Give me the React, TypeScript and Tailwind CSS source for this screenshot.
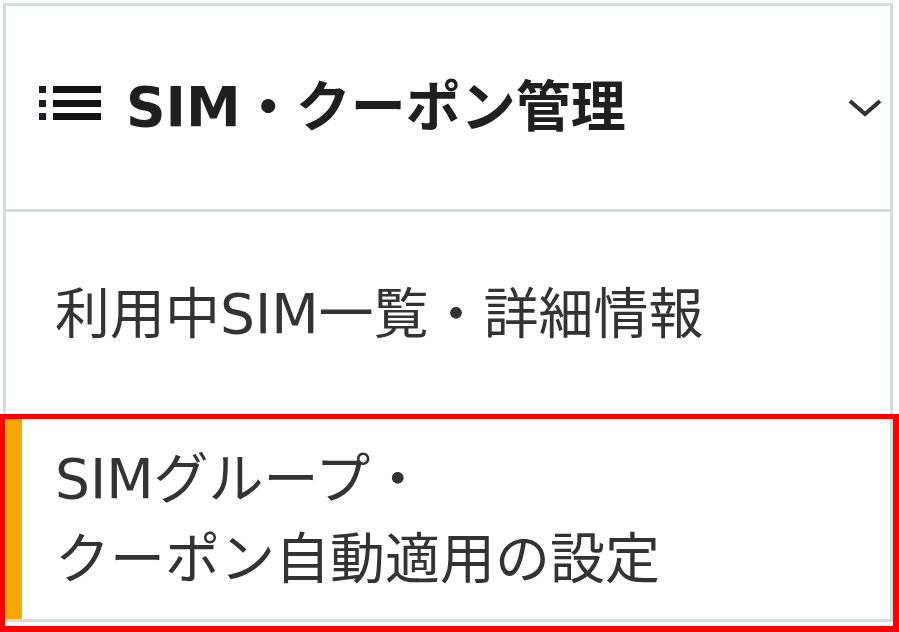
const font = { fontFamily: '"DejaVu Sans", "Noto Sans CJK JP", sans-serif' };

const ListIcon = () => (
  <svg width="62" height="34" viewBox="0 0 62 34" className="shrink-0 mb-[10px]">
    <rect x="0" y="0" width="7" height="7" fill="#1c1c28" />
    <rect x="0" y="14" width="7" height="7" fill="#1c1c28" />
    <rect x="0" y="27" width="7" height="7" fill="#1c1c28" />
    <rect x="14" y="0" width="48" height="7" fill="#111" />
    <rect x="14" y="14" width="48" height="7" fill="#111" />
    <rect x="14" y="27" width="48" height="7" fill="#111" />
  </svg>
);

const Chevron = () => (
  <svg width="36" height="22" viewBox="0 0 36 22" className="shrink-0">
    <path d="M3 4 L18 17 L33 4" fill="none" stroke="#333" strokeWidth="4" />
  </svg>
);

export default function App() {
  return (
    <div className="relative w-[899px] h-[632px] overflow-hidden bg-white" style={font}>
      <div className="ml-[3px] mt-[3px] w-[890px] border-x-[3px] border-t-[3px] border-[#d5dadd]">
        {/* header */}
        <div className="h-[206px] flex items-center pl-[33px] pr-[7px] border-b-[3px] border-[#d5dadd]">
          <ListIcon />
          <span className="ml-[25px] text-[55px] font-bold text-[#1f1f1f] leading-none whitespace-nowrap">
            SIM・クーポン管理
          </span>
          <div className="ml-auto">
            <Chevron />
          </div>
        </div>

        {/* items */}
        <div className="h-[204px] flex items-center pl-[49px]">
          <span className="text-[55px] text-[#333] leading-none whitespace-nowrap">利用中SIM一覧・詳細情報</span>
        </div>
        <div className="flex h-[206px] border-t-[3px] border-b-[3px] border-[#d5dadd]">
          <div className="w-[16px] bg-[#f5a900]" />
          <div className="flex flex-col justify-center pl-[33px] text-[55px] text-[#333] leading-[80px]">
            <span>SIMグループ・</span>
            <span>クーポン自動適用の設定</span>
          </div>
        </div>
      </div>

      {/* annotation box */}
      <div className="absolute left-0 top-[414px] w-[899px] h-[218px] border-t-[5px] border-l-[5px] border-r-[6px] border-b-[6px] border-[#ff0000]" />
    </div>
  );
}
